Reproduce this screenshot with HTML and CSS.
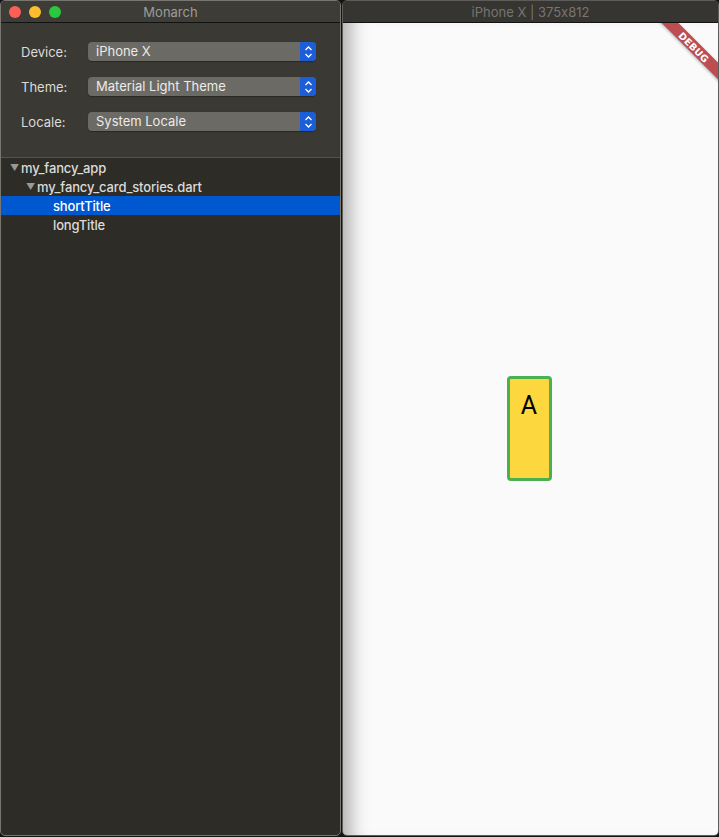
FILE: index.html
```html
<!DOCTYPE html>
<html>
<head>
<meta charset="utf-8">
<link rel="stylesheet" href="styles.css">
</head>
<body>
<div class="desktop">
  <div class="win left">
    <div class="titlebar">
      <div class="lights">
        <span class="light red"></span>
        <span class="light yellow"></span>
        <span class="light green"></span>
      </div>
      <div class="title">Monarch</div>
    </div>
    <div class="form">
      <div class="row">
        <div class="label">Device:</div>
        <div class="select"><span class="val">iPhone X</span><span class="stepper"><svg width="9" height="14" viewBox="0 0 9 14"><path d="M1.5 5 L4.5 2 L7.5 5 M1.5 9 L4.5 12 L7.5 9" fill="none" stroke="#fff" stroke-width="1.3"/></svg></span></div>
      </div>
      <div class="row">
        <div class="label">Theme:</div>
        <div class="select"><span class="val">Material Light Theme</span><span class="stepper"><svg width="9" height="14" viewBox="0 0 9 14"><path d="M1.5 5 L4.5 2 L7.5 5 M1.5 9 L4.5 12 L7.5 9" fill="none" stroke="#fff" stroke-width="1.3"/></svg></span></div>
      </div>
      <div class="row">
        <div class="label">Locale:</div>
        <div class="select"><span class="val">System Locale</span><span class="stepper"><svg width="9" height="14" viewBox="0 0 9 14"><path d="M1.5 5 L4.5 2 L7.5 5 M1.5 9 L4.5 12 L7.5 9" fill="none" stroke="#fff" stroke-width="1.3"/></svg></span></div>
      </div>
    </div>
    <div class="tree">
      <div class="node lvl0"><span class="tri">▼</span>my_fancy_app</div>
      <div class="node lvl1"><span class="tri">▼</span>my_fancy_card_stories.dart</div>
      <div class="node lvl2 selected">shortTitle</div>
      <div class="node lvl2">longTitle</div>
    </div>
  </div>
  <div class="win right">
    <div class="titlebar">
      <div class="title dim">iPhone X | 375x812</div>
    </div>
    <div class="screen">
      <div class="card"><span>A</span></div>
      <div class="debug"><span>DEBUG</span></div>
    </div>
  </div>
</div>
</body>
</html>
```

FILE: styles.css
```css
* { box-sizing: border-box; }
html, body { margin: 0; padding: 0; }
body {
  width: 719px;
  height: 837px;
  background: #141414;
  font-family: "Liberation Sans", Arial, sans-serif;
  overflow: hidden;
}
.desktop {
  display: flex;
  gap: 1px;
  height: 836px;
}
.win {
  display: flex;
  flex-direction: column;
  border: 1px solid #77766f;
  border-radius: 5px;
  overflow: hidden;
}
.left {
  width: 341px;
  background: #2d2c27;
}
.right {
  flex: 1;
  border-color: #5d5c58;
}
.titlebar {
  height: 22px;
  flex: none;
  display: flex;
  align-items: center;
  justify-content: center;
  position: relative;
  border-bottom: 1px solid #121212;
}
.left .titlebar { background: #3d3c37; }
.right .titlebar { background: #363532; }
.lights {
  position: absolute;
  left: 8px;
  top: 5px;
  display: flex;
  gap: 8px;
}
.light { width: 12px; height: 12px; border-radius: 50%; }
.red { background: #fd5f57; }
.yellow { background: #febc2e; }
.green { background: #29c83f; }
.title {
  font-family: "Inter", "Liberation Sans", sans-serif;
  font-feature-settings: "calt" 0;
  font-size: 13px;
  color: #9d9c98;
}
.title.dim { color: #76756f; }
.form {
  background: #3a3934;
  height: 135px;
  flex: none;
  padding: 19px 0 0 20px;
  display: flex;
  flex-direction: column;
  gap: 16px;
  border-bottom: 1px solid #54534f;
}
.row {
  display: flex;
  align-items: center;
  height: 19px;
}
.label {
  width: 67px;
  font-family: "Inter", "Liberation Sans", sans-serif;
  font-size: 13px;
  color: #dcdbd8;
}
.select {
  width: 228px;
  height: 19px;
  background: #6b6a65;
  border-radius: 4px;
  display: flex;
  align-items: center;
  justify-content: space-between;
  box-shadow: 0 0.5px 1px rgba(0,0,0,0.3);
}
.val {
  padding-left: 8px;
  padding-bottom: 1px;
  font-family: "Inter", "Liberation Sans", sans-serif;
  font-size: 13px;
  color: #ecebe8;
}
.stepper {
  width: 16px;
  height: 19px;
  background: #1c5ed9;
  border-radius: 0 4px 4px 0;
  display: flex;
  align-items: center;
  justify-content: center;
}
.tree {
  flex: 1;
  padding-top: 0;
}
.node {
  height: 19px;
  display: flex;
  align-items: center;
  font-family: "Inter", "Liberation Sans", sans-serif;
  font-size: 13px;
  font-weight: 500;
  letter-spacing: -0.15px;
  color: #dcdbd8;
}
.tri {
  font-size: 9px;
  color: #9a9994;
  width: 11px;
}
.lvl0 { padding-left: 9px; }
.lvl1 { padding-left: 25px; }
.lvl2 { padding-left: 52px; }
.selected { background: #0058d0; color: #fff; }
.screen {
  flex: 1;
  background: #fafafa;
  position: relative;
  display: flex;
  align-items: center;
  justify-content: center;
  box-shadow: inset 22px 0 18px -14px rgba(0,0,0,0.3);
  overflow: hidden;
}
.card {
  width: 45px;
  height: 105px;
  margin-left: -3px;
  margin-top: -2px;
  background: #fdd73e;
  border: 3px solid #4caf50;
  border-radius: 4px;
  display: flex;
  justify-content: center;
  padding-top: 14px;
  font-family: "Roboto", "Liberation Sans", sans-serif;
  font-size: 25px;
  color: #000;
  line-height: 1;
}
.debug {
  position: absolute;
  top: 18px;
  right: -36px;
  width: 120px;
  height: 12px;
  background: rgba(170, 30, 35, 0.78);
  transform: rotate(45deg);
  display: flex;
  align-items: center;
  justify-content: center;
  box-shadow: 0 1px 3px rgba(0,0,0,0.25);
}
.debug span {
  font-family: "DejaVu Sans", sans-serif;
  font-weight: bold;
  font-size: 9.5px;
  color: #fff;
  letter-spacing: 0.2px;
}
```
